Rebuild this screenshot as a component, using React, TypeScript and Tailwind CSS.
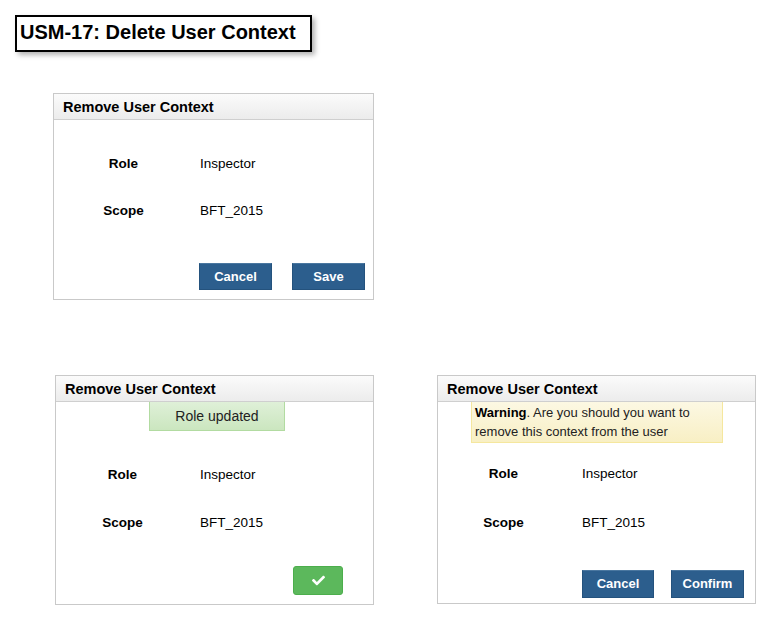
import React from "react";
import { FaCheck } from "react-icons/fa";

const font = "font-['Liberation_Sans',Arial,sans-serif]";

function Header() {
  return (
    <div className="h-[26px] border-b border-[#cfcfcf] bg-gradient-to-b from-[#fbfbfb] to-[#ececec] pl-[9px] flex items-center pt-[2px]">
      <span className="text-[14.5px] font-bold text-black leading-none">Remove User Context</span>
    </div>
  );
}

function Row({ label, value, labelW, valuePl }: { label: string; value: string; labelW: string; valuePl: string }) {
  return (
    <div className="flex items-center h-[20px]">
      <div className={`${labelW} text-center font-bold text-[13.5px] text-black`}>{label}</div>
      <div className={`${valuePl} text-[13.5px] text-black`}>{value}</div>
    </div>
  );
}

function BlueBtn({ children, w }: { children: React.ReactNode; w: string }) {
  return (
    <div className={`${w} h-full bg-[#2c5e8d] border border-[#24527d] border-t-[#4a77a0] flex items-center justify-center text-white font-bold text-[13px]`}>
      {children}
    </div>
  );
}

export default function App() {
  return (
    <div className={`w-[771px] h-[621px] bg-white ${font} overflow-hidden`}>
      <div className="pt-[15px] pl-[15px]">
        <div className="w-[297px] h-[37px] border-2 border-black bg-white shadow-[3px_3px_5px_rgba(0,0,0,0.3)] flex items-center pl-[3px] pb-[3px]">
          <span className="text-[20px] font-bold text-black leading-none">USM-17: Delete User Context</span>
        </div>
      </div>

      {/* Panel 1 */}
      <div className="ml-[53px] mt-[41px] w-[321px] h-[207px] border border-[#c9c9c9] flex flex-col">
        <Header />
        <div className="mt-[34px] flex flex-col gap-[27px]">
          <Row label="Role" value="Inspector" labelW="w-[139px]" valuePl="pl-[7px]" />
          <Row label="Scope" value="BFT_2015" labelW="w-[139px]" valuePl="pl-[7px]" />
        </div>
        <div className="mt-[42px] h-[27px] flex pl-[145px] gap-[20px]">
          <BlueBtn w="w-[73px]">Cancel</BlueBtn>
          <BlueBtn w="w-[73px]">Save</BlueBtn>
        </div>
      </div>

      <div className="flex mt-[75px]">
        {/* Panel 2 */}
        <div className="ml-[55px] w-[319px] h-[230px] border border-[#c9c9c9] flex flex-col">
          <Header />
          <div className="ml-[93px] w-[136px] h-[29px] bg-gradient-to-b from-[#dff0d8] to-[#cbe6bf] border border-t-0 border-[#b2dba1] flex items-center justify-center text-[14px] text-[#222]">
            Role updated
          </div>
          <div className="mt-[34px] flex flex-col gap-[28px]">
            <Row label="Role" value="Inspector" labelW="w-[133px]" valuePl="pl-[11px]" />
            <Row label="Scope" value="BFT_2015" labelW="w-[133px]" valuePl="pl-[11px]" />
          </div>
          <div className="mt-[33px] flex pl-[237px]">
            <div className="w-[50px] h-[29px] rounded-[3px] bg-[#5cb85c] border border-[#4cae4c] flex items-center justify-center text-white">
              <FaCheck className="w-[13px] h-[13px]" />
            </div>
          </div>
        </div>

        {/* Panel 3 */}
        <div className="ml-[63px] w-[319px] h-[229px] border border-[#c9c9c9] flex flex-col">
          <Header />
          <div className="ml-[33px] w-[252px] h-[41px] bg-gradient-to-b from-[#fcf8e3] to-[#f8efc4] border border-t-0 border-[#f5e79e] pl-[3px] pt-[1px] text-[13px] leading-[19px] text-[#222]">
            <b className="text-black">Warning</b>. Are you should you want to
            <br />
            remove this context from the user
          </div>
          <div className="mt-[21px] flex flex-col gap-[29px]">
            <Row label="Role" value="Inspector" labelW="w-[131px]" valuePl="pl-[13px]" />
            <Row label="Scope" value="BFT_2015" labelW="w-[131px]" valuePl="pl-[13px]" />
          </div>
          <div className="mt-[37px] h-[28px] flex pl-[144px] gap-[17px]">
            <BlueBtn w="w-[72px]">Cancel</BlueBtn>
            <BlueBtn w="w-[73px]">Confirm</BlueBtn>
          </div>
        </div>
      </div>
    </div>
  );
}
